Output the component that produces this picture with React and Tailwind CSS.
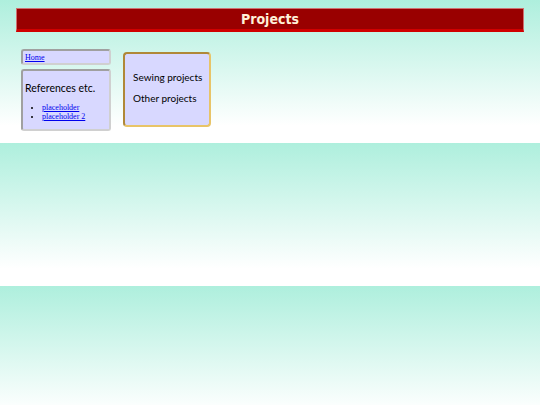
export default function App() {
  return (
    <div className="h-[405px] w-[540px] overflow-hidden bg-[linear-gradient(to_bottom,#aeefdd,#ffffff_88%)] bg-[length:100%_143px] bg-repeat-y font-['Liberation_Serif',serif]">
      <div className="px-4 pt-2">
        <div className="flex h-[24px] items-center justify-center border border-[#d07070] border-b-[3px] border-b-[#d00000] bg-[#990000]">
          <h1 className="font-['DejaVu_Sans_Condensed','DejaVu_Sans',sans-serif] text-[14px] font-bold leading-none text-[#fff0d8]">
            Projects
          </h1>
        </div>
      </div>

      <div className="flex items-start gap-3 pl-[21px] pt-[17px]">
        <div className="flex w-[90px] flex-col gap-[4px]">
          <div className="rounded-[3px] border-2 border-[#a0a0a0] border-b-[#d0d0d0] border-r-[#d0d0d0] bg-[#d8d8ff] px-[2px] pt-[1px] text-[8px] leading-[11px]">
            <a href="#" className="text-[#0000ee] underline">Home</a>
          </div>
          <div className="h-[62px] rounded-[3px] border-2 border-[#a0a0a0] border-b-[#d0d0d0] border-r-[#d0d0d0] bg-[#d8d8ff] px-[2px] text-[8px] leading-[9px]">
            <h2 className="mt-[12px] whitespace-nowrap font-['Lato',sans-serif] text-[10.5px] leading-none text-black">References etc.</h2>
            <ul className="mt-[9px] list-disc pl-[17px]">
              <li><a href="#" className="text-[#0000ee] underline">placeholder</a></li>
              <li><a href="#" className="text-[#0000ee] underline">placeholder 2</a></li>
            </ul>
          </div>
        </div>

        <div className="mt-[3px] flex h-[75px] w-[88px] flex-col gap-[11px] rounded-[4px] border-2 border-[#b08838] border-b-[#e8c468] border-r-[#e8c468] bg-[#d8d8ff] pl-[8px] pt-[18px] font-['Lato',sans-serif] text-[10px] leading-none text-black">
          <div className="whitespace-nowrap">Sewing projects</div>
          <div className="whitespace-nowrap">Other projects</div>
        </div>
      </div>
    </div>
  )
}
